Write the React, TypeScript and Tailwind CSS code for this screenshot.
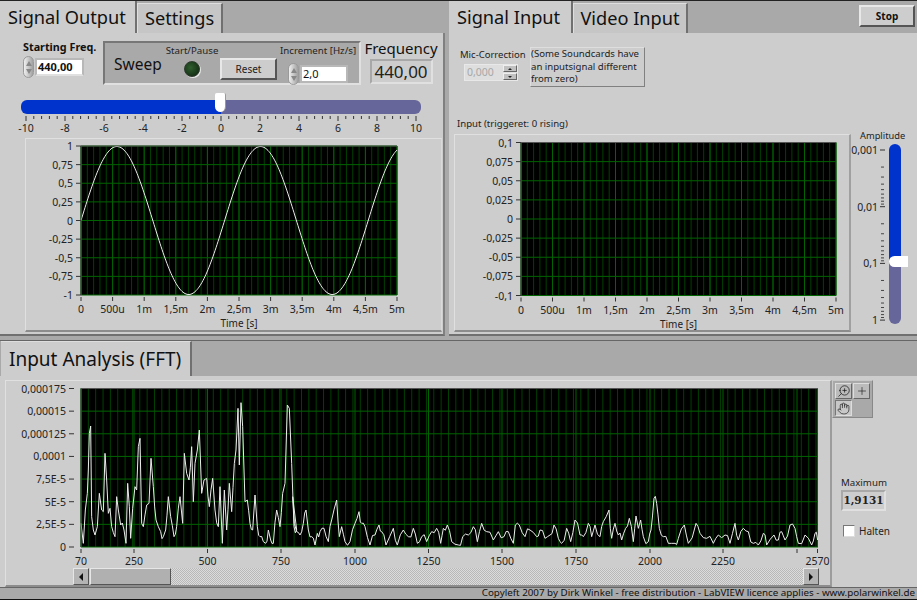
import { Hand, Plus, ZoomIn } from "lucide-react";

const FONT = "font-['Noto_Sans',sans-serif]";

const lowData = [
  [243,580],[250,640],[256,540],[262,490],[265,420],[268,310],[272,288],[275,560],[280,600],[285,615],[292,590],[298,490],[305,540],[310,545],[315,370],[320,450],[325,550],[330,535],[335,590],[345,620],[350,500],[355,540],[362,585],[372,600],[378,640],[383,460],[388,530],[392,625],[398,535],[405,470],[410,480],[415,350],[420,325],[425,580],[430,590],[440,525],[447,520],[453,385],[460,470],[468,570],[475,590],[482,605],[490,620],[497,600],[505,500],[512,560],[522,620],[530,590],[540,500],[548,580],[553,370],[560,430],[567,450],[575,350],[580,515],[585,400],[592,360],[598,300],[605,490],[612,450],[620,445],[628,530],[638,445],[645,540],[655,590],[660,470],[667,640],[673,480],[680,600],[688,460],[695,545],[703,400],[708,360],[714,235],[718,405],[723,218],[728,290],[735,515],[742,510],[750,580],[758,600],[765,495],[772,590],[780,620],[790,635],[797,640],[805,600],[812,630],[820,640],[830,540],[840,590],[848,490],[855,460],[862,225],[868,235],[875,400],[882,590],[890,600],
].map(([x, y]) => [x / 3, 330 + y / 3]);

const midData = [
  [38,350],[43,430],[50,455],[60,465],[70,430],[78,390],[85,450],[95,470],[105,495],[112,460],[120,455],[132,445],[145,485],[155,420],[170,360],[178,470],[185,440],[195,485],[210,485],[225,430],[237,395],[245,430],[255,440],[270,495],[285,465],[297,435],[305,455],[318,495],[340,445],[352,495],[370,450],[385,470],[400,445],[412,490],[425,470],[440,485],[455,455],[470,445],[482,490],[490,445],[502,435],[515,485],[535,495],[548,470],[565,465],[580,440],[592,485],[605,430],[620,455],[640,480],[655,455],[672,470],[685,455],[700,490],[706,435],[718,435],[735,470],[750,450],[770,470],[780,450],[795,475],[810,465],
].map(([x, y]) => [280 + x / 3, 380 + y / 3]);

const highData = [
  [12,255],[25,295],[35,310],[50,265],[62,305],[75,240],[90,285],[100,290],[115,250],[125,290],[135,255],[150,290],[160,245],[177,210],[185,295],[195,250],[205,285],[215,300],[227,265],[238,235],[250,305],[258,228],[265,265],[272,240],[280,290],[295,305],[303,270],[312,175],[320,190],[328,265],[340,290],[355,310],[375,310],[385,295],[403,255],[415,310],[438,250],[450,280],[470,295],[490,310],[505,285],[525,285],[540,310],[555,250],[565,300],[580,265],[595,275],[610,310],[625,315],[640,280],[650,315],[672,285],[685,300],[695,275],[705,300],[720,255],[735,265],[745,310],[765,285],[785,315],[795,280],[803,300],
].map(([x, y]) => [550 + x / 3, 440 + y / 3]);

// the traced points are sparser than the real trace, fill the gaps with a little noise
function roughen(points: number[][]) {
  const out: number[][] = [];
  points.forEach((p, i) => {
    out.push(p);
    const next = points[i + 1];
    if (next && next[0] - p[0] > 2.5) {
      const jitter = (((i * 37) % 11) - 5) * 0.9;
      const y = Math.min(546, (p[1] + next[1]) / 2 + jitter);
      out.push([(p[0] + next[0]) / 2, y]);
    }
  });
  return out;
}

const fftLine = roughen([...lowData, ...midData, ...highData]).map((p) => p.join(",")).join(" ");

const sineLine = Array.from({ length: 317 }, (_, i) => `${81 + i},${219.5 - 74 * Math.sin((2 * Math.PI * i) / 143.6)}`).join(" ");

function range(start: number, end: number, step: number) {
  const out: number[] = [];
  for (let v = start; v <= end + 0.01; v += step) out.push(v);
  return out;
}

type ChartProps = {
  box: [number, number, number, number];
  plot: [number, number, number, number];
  yLabels: string[];
  xTicks: { x: number; label: string }[];
  minor: number[];
  line?: string;
  title?: string;
  labelGap: number;
};

function Chart({ box, plot, yLabels, xTicks, minor, line, title, labelGap }: ChartProps) {
  const [bx, by, bw, bh] = box;
  const [px, py, pw, ph] = plot;
  const bottom = py + ph;
  const ys = yLabels.map((_, i) => py + (ph * i) / (yLabels.length - 1));
  return (
    <svg width={bw} height={bh} viewBox={`${bx} ${by} ${bw} ${bh}`} className={`block shrink-0 ${FONT}`}>
      <rect x={px} y={py} width={pw} height={ph} fill="#000" />
      {minor.map((x) => (
        <line key={x} x1={x} x2={x} y1={py} y2={bottom} stroke="#004000" />
      ))}
      {ys.map((y) => (
        <line key={y} x1={px} x2={px + pw} y1={y} y2={y} stroke="#006400" />
      ))}
      {xTicks.map((t) => (
        <line key={t.x} x1={t.x} x2={t.x} y1={py} y2={bottom} stroke="#006400" />
      ))}
      {line && <polyline points={line} fill="none" stroke="#ececec" strokeWidth={1} />}
      <line x1={px} x2={px} y1={py} y2={bottom} stroke="#555" />
      <line x1={px} x2={px + pw} y1={py} y2={py} stroke="#555" />
      {ys.map((y, i) => (
        <g key={y}>
          <line x1={px - labelGap + 5} x2={px - labelGap + 10} y1={y} y2={y} stroke="#333" />
          <text x={px - labelGap + 2} y={y + 4} textAnchor="end" fontSize={10.5} fill="#222">
            {yLabels[i]}
          </text>
        </g>
      ))}
      {xTicks.map((t) => (
        <g key={t.x}>
          <line x1={t.x} x2={t.x} y1={bottom + 2} y2={bottom + 6} stroke="#333" />
          {t.label && (
            <text x={t.x} y={bottom + 18} textAnchor="middle" fontSize={10.5} fill="#222">
              {t.label}
            </text>
          )}
        </g>
      ))}
      {title && (
        <text x={px + pw / 2} y={bottom + 32} textAnchor="middle" fontSize={10} fill="#222">
          {title}
        </text>
      )}
    </svg>
  );
}

const timeLabels = ["0", "500u", "1m", "1,5m", "2m", "2,5m", "3m", "3,5m", "4m", "4,5m", "5m"];

function Tab({ label, active, width }: { label: string; active?: boolean; width: number }) {
  return (
    <div
      style={{ width }}
      className={
        active
          ? "flex h-[32px] shrink-0 items-center border-r-2 border-r-[#707070] bg-[#cdcdcd] pl-[8px] text-[18.2px] leading-none whitespace-nowrap text-[#111]"
          : "mt-[2px] flex h-[30px] shrink-0 items-center justify-center border-t border-r-2 border-l border-t-[#dedede] border-r-[#707070] border-l-[#dedede] bg-[#c6c6c6] text-[18.2px] leading-none whitespace-nowrap text-[#111]"
      }
    >
      {label}
    </div>
  );
}

function Spinner() {
  return (
    <div className="relative flex h-[22px] w-[11px] shrink-0 flex-col items-center justify-center gap-[3px] rounded-full border border-[#9a9a9a] bg-gradient-to-r from-[#f0f0f0] to-[#a0a0a0]">
      <span className="h-0 w-0 border-x-[3px] border-b-[5px] border-x-transparent border-b-[#888]" />
      <span className="h-0 w-0 border-x-[3px] border-t-[5px] border-x-transparent border-t-[#888]" />
    </div>
  );
}

function ScaleTicks() {
  return (
    <svg width={420} height={30} viewBox="16 115 420 30" className={`block ${FONT}`}>
      {range(26, 416, 7.8).map((x, i) => (
        <line key={x} x1={x} x2={x} y1={117} y2={i % 5 === 0 ? 122 : 120} stroke="#333" />
      ))}
      {range(-10, 10, 2).map((v) => (
        <text key={v} x={221 + v * 19.5} y={133} textAnchor="middle" fontSize={10.5} fill="#222">
          {v}
        </text>
      ))}
    </svg>
  );
}

function AmplitudeScale() {
  const decades = [0, 1, 2];
  return (
    <svg width={44} height={190} viewBox="-8 139 44 190" className={`absolute top-[10px] left-[-8px] ${FONT}`}>
      {["0,001", "0,01", "0,1", "1"].map((v, i) => (
        <g key={v}>
          <line x1={27} x2={32} y1={149 + i * 56.7} y2={149 + i * 56.7} stroke="#333" />
          <text x={25} y={153 + i * 56.7} textAnchor="end" fontSize={10.5} fill="#222">
            {v}
          </text>
        </g>
      ))}
      {decades.map((d) =>
        [2, 3, 4, 5, 6, 7, 8, 9].map((k) => {
          const y = 149 + (d + Math.log10(k)) * 56.7;
          return <line key={`${d}-${k}`} x1={28} x2={31} y1={y} y2={y} stroke="#444" />;
        }),
      )}
    </svg>
  );
}

function ScrollArrow({ dir }: { dir: "left" | "right" }) {
  return (
    <div className="flex h-[17px] w-[16px] shrink-0 items-center justify-center border border-t-[#e6e6e6] border-r-[#555] border-b-[#555] border-l-[#e6e6e6] bg-[#b4b4b4]">
      {dir === "left" ? (
        <span className="h-0 w-0 border-y-[4px] border-r-[4px] border-y-transparent border-r-[#111]" />
      ) : (
        <span className="h-0 w-0 border-y-[4px] border-l-[4px] border-y-transparent border-l-[#111]" />
      )}
    </div>
  );
}

function SignalOutput() {
  return (
    <div className="flex w-[449px] shrink-0 flex-col">
      <div className="flex h-[32px]">
        <Tab label="Signal Output" active width={137} />
        <Tab label="Settings" width={86} />
      </div>
      <div className="flex h-[303px] w-[445px] flex-col border-r-2 border-b-2 border-r-[#808080] border-b-[#707070] bg-[#cdcdcd]">
        <div className="flex h-[55px] items-start pt-[8px] pl-[23px]">
          <div className="w-[80px] shrink-0">
            <div className="text-[10.8px] leading-[11px] font-bold whitespace-nowrap text-[#111]">Starting Freq.</div>
            <div className="mt-[4px] flex items-center gap-[1px]">
              <Spinner />
              <div className="flex h-[18px] w-[49px] items-center border-2 border-[#b8b8b8] border-b-[#e0e0e0] bg-white pl-[1px] text-[11px] font-bold text-[#111]">
                440,00
              </div>
            </div>
          </div>
          <div className="flex h-[44px] w-[258px] shrink-0 items-start border-2 border-t-[#777] border-r-[#e0e0e0] border-b-[#e0e0e0] border-l-[#777] bg-[#a9a9a9]">
            <div className="mt-[11px] ml-[9px] w-[50px] text-[15.5px] leading-[20px] text-[#111]">Sweep</div>
            <div className="mt-[2px] flex w-[56px] flex-col items-center">
              <div className="text-[9.7px] leading-[12px] whitespace-nowrap text-[#222]">Start/Pause</div>
              <div className="mt-[4px] h-[16px] w-[16px] rounded-full border border-[#2c3a2c] bg-[radial-gradient(circle_at_40%_40%,#2f5f2f,#0c200c)] shadow-[1px_1px_0_#e8e8e8]" />
            </div>
            <div className="mt-[15px] flex h-[22px] w-[57px] shrink-0 items-center justify-center border-2 border-t-[#e8e8e8] border-r-[#555] border-b-[#555] border-l-[#e8e8e8] bg-[#cdcdcd] text-[10px] text-[#222]">
              Reset
            </div>
            <div className="ml-[3px] flex flex-col">
              <div className="mt-[2px] text-[9.7px] leading-[12px] whitespace-nowrap text-[#222]">Increment [Hz/s]</div>
              <div className="mt-[6px] ml-[8px] flex items-center gap-[1px]">
                <Spinner />
                <div className="flex h-[18px] w-[48px] items-center border-2 border-[#b8b8b8] bg-white pl-[1px] text-[11px] text-[#111]">
                  2,0
                </div>
              </div>
            </div>
          </div>
          <div className="mt-[-2px] flex w-[80px] shrink-0 flex-col items-center">
            <div className="text-[15px] leading-[18px] text-[#111]">Frequency</div>
            <div className="mt-[2px] flex h-[25px] w-[63px] items-center justify-center border-2 border-t-[#a8a8a8] border-r-[#e0e0e0] border-b-[#e0e0e0] border-l-[#a8a8a8] text-[17px] text-[#222]">
              440,00
            </div>
          </div>
        </div>
        <div className="relative mt-[12px] ml-[21px] flex h-[14px] w-[400px]">
          <div className="w-[200px] rounded-l-[6px] bg-[#0033cc]" />
          <div className="w-[200px] rounded-r-[6px] bg-[#66669a]" />
          <div className="absolute top-[-7px] left-[194px] h-[19px] w-[11px] rounded-t-[2px] rounded-b-[6px] border-r border-[#999] bg-white" />
        </div>
        <div className="ml-[16px]">
          <ScaleTicks />
        </div>
        <div className="mt-[-6px] ml-[25px] w-[417px] border-t border-r border-b-2 border-l border-t-[#e0e0e0] border-r-[#dadada] border-b-[#8c8c8c] border-l-[#e0e0e0]">
          <Chart
            box={[26, 138, 415, 191]}
            plot={[81, 145, 316, 149]}
            yLabels={["1", "0,75", "0,5", "0,25", "0", "-0,25", "-0,5", "-0,75", "-1"]}
            xTicks={timeLabels.map((label, i) => ({ x: 81 + i * 31.6, label }))}
            minor={range(81, 397, 6.32)}
            line={sineLine}
            title="Time [s]"
            labelGap={10}
          />
        </div>
      </div>
    </div>
  );
}

function SignalInput() {
  return (
    <div className="flex flex-1 flex-col">
      <div className="flex h-[32px] bg-[#a9a9a9]">
        <Tab label="Signal Input" active width={124} />
        <Tab label="Video Input" width={115} />
        <div className="mt-[4px] mr-[2px] ml-auto flex h-[22px] w-[56px] items-center justify-center border-2 border-t-[#e8e8e8] border-r-[#555] border-b-[#555] border-l-[#e8e8e8] bg-[#cdcdcd] text-[10px] font-bold text-[#111]">
          Stop
        </div>
      </div>
      <div className="flex h-[303px] flex-col border-b-2 border-b-[#707070] bg-[#cdcdcd]">
        <div className="flex h-[54px] pt-[14px] pl-[11px]">
          <div className="w-[70px] shrink-0">
            <div className="mt-[2px] text-[9.5px] leading-[12px] whitespace-nowrap text-[#222]">Mic-Correction</div>
            <div className="mt-[3px] ml-[4px] flex h-[17px] w-[54px] items-center justify-between border border-[#e8e8e8] bg-[#dedede] pl-[2px] text-[10.5px] text-[#a8a8a8]">
              0,000
              <div className="flex h-[15px] w-[14px] flex-col gap-[1px]">
                <div className="flex h-[7px] items-center justify-center border border-t-[#eee] border-r-[#666] border-b-[#666] border-l-[#eee] bg-[#c0c0c0]">
                  <span className="h-0 w-0 border-x-[2px] border-b-[2px] border-x-transparent border-b-[#222]" />
                </div>
                <div className="flex h-[7px] items-center justify-center border border-t-[#eee] border-r-[#666] border-b-[#666] border-l-[#eee] bg-[#c0c0c0]">
                  <span className="h-0 w-0 border-x-[2px] border-t-[2px] border-x-transparent border-t-[#222]" />
                </div>
              </div>
            </div>
          </div>
          <div className="h-[40px] w-[115px] shrink-0 border border-t-[#dedede] border-r-[#808080] border-b-[#808080] border-l-[#dedede] text-[9.6px] leading-[12.5px] whitespace-nowrap text-[#222]">
            <div>(Some Soundcards have</div>
            <div>an inputsignal different</div>
            <div>from zero)</div>
          </div>
        </div>
        <div className="flex">
          <div className="flex w-[404px] shrink-0 flex-col">
            <div className="mt-[31px] ml-[8px] text-[9.6px] leading-[12px] text-[#222]">Input (triggeret: 0 rising)</div>
            <div className="mt-[4px] ml-[5px] w-[397px] border-t border-r-2 border-b-2 border-l border-t-[#e0e0e0] border-r-[#a0a0a0] border-b-[#8c8c8c] border-l-[#e0e0e0]">
              <Chart
                box={[456, 134, 394, 195]}
                plot={[522, 141.5, 315, 153]}
                yLabels={["0,1", "0,075", "0,05", "0,025", "0", "-0,025", "-0,05", "-0,075", "-0,1"]}
                xTicks={timeLabels.map((label, i) => ({ x: 522 + i * 31.5, label }))}
                minor={range(522, 837, 6.3)}
                title="Time [s]"
                labelGap={10}
              />
            </div>
          </div>
          <div className="relative mt-[43px] flex h-[200px] w-[60px] flex-col">
            <div className="ml-[7px] text-[9.3px] leading-[12px] text-[#222]">Amplitude</div>
            <AmplitudeScale />
            <div className="absolute top-[14px] left-[36px] flex h-[180px] w-[12px] flex-col">
              <div className="h-[116px] rounded-t-[6px] bg-[#0033cc]" />
              <div className="h-[64px] rounded-b-[6px] bg-[#66669a]" />
              <div className="absolute top-[112px] left-0 h-[11px] w-[19px] rounded-l-[6px] bg-white" />
            </div>
          </div>
        </div>
      </div>
    </div>
  );
}

function InputAnalysis() {
  return (
    <div className="flex flex-1 flex-col">
      <div className="flex h-[35px] bg-[#a9a9a9] pl-[1px]">
        <div className="flex h-[35px] w-[191px] shrink-0 items-center border-t border-r-2 border-t-[#dedede] border-r-[#707070] bg-[#cdcdcd] pl-[8px] text-[19px] leading-none whitespace-nowrap text-[#111]">
          Input Analysis (FFT)
        </div>
      </div>
      <div className="flex h-[211px] bg-[#cdcdcd] pt-[4px] pl-[5px]">
        <div className="flex h-[207px] w-[827px] shrink-0 flex-col border-t border-r-2 border-b-2 border-l border-t-[#e0e0e0] border-r-[#9c9c9c] border-b-[#8c8c8c] border-l-[#e0e0e0]">
          <Chart
            box={[6, 381, 824, 187]}
            plot={[81, 388.5, 737, 158.5]}
            yLabels={["0,000175", "0,00015", "0,000125", "0,0001", "7,5E-5", "5E-5", "2,5E-5", "0"]}
            xTicks={[
              { x: 81, label: "70" },
              { x: 134, label: "250" },
              { x: 207.5, label: "500" },
              { x: 281, label: "750" },
              { x: 355, label: "1000" },
              { x: 428.5, label: "1250" },
              { x: 502, label: "1500" },
              { x: 576, label: "1750" },
              { x: 650, label: "2000" },
              { x: 723, label: "2250" },
              { x: 797, label: "" },
              { x: 817.5, label: "2570" },
            ]}
            minor={range(81, 818, 7.35)}
            line={fftLine}
            labelGap={17}
          />
          <div className="ml-[67px] flex h-[17px] w-[746px]">
            <ScrollArrow dir="left" />
            <div className="ml-[1px] h-[17px] w-[81px] border border-t-[#e6e6e6] border-r-[#555] border-b-[#555] border-l-[#e6e6e6] bg-[#b0b0b0]" />
            <div className="flex-1 bg-[repeating-conic-gradient(#b8b8b8_0_25%,#dcdcdc_0_50%)] bg-[length:2px_2px]" />
            <ScrollArrow dir="right" />
          </div>
        </div>
        <div className="flex flex-col">
          <div className="grid h-[38px] w-[41px] grid-cols-2 gap-[1px] border border-t-[#c8c8c8] border-r-[#888] border-b-[#888] border-l-[#c8c8c8] bg-[#a9a9a9] p-[2px]">
            <div className="flex h-[16px] items-center justify-center border border-t-[#ddd] border-r-[#666] border-b-[#666] border-l-[#ddd] bg-[#bbb]">
              <ZoomIn size={14} strokeWidth={1.2} color="#111" className="-scale-x-100" />
            </div>
            <div className="flex h-[16px] items-center justify-center border border-t-[#ddd] border-r-[#666] border-b-[#666] border-l-[#ddd] bg-[#bbb]">
              <Plus size={12} strokeWidth={1.2} color="#111" />
            </div>
            <div className="flex h-[16px] items-center justify-center border border-t-[#777] border-r-[#ddd] border-b-[#ddd] border-l-[#777] bg-[#c8c8c8]">
              <Hand size={13} strokeWidth={1.2} color="#111" />
            </div>
          </div>
          <div className="mt-[59px] ml-[9px] text-[9.7px] leading-[12px] text-[#222]">Maximum</div>
          <div className="mt-[1px] ml-[9px] flex h-[21px] w-[45px] items-center justify-center border-2 border-t-[#a8a8a8] border-r-[#e0e0e0] border-b-[#e0e0e0] border-l-[#a8a8a8] font-['DejaVu_Serif',serif] text-[10.5px] font-bold text-[#222]">
            1,9131
          </div>
          <div className="mt-[14px] ml-[11px] flex items-center gap-[4px]">
            <div className="h-[12px] w-[12px] border border-t-[#777] border-r-[#ddd] border-b-[#ddd] border-l-[#777] bg-white" />
            <span className="text-[10px] leading-[12px] text-[#222]">Halten</span>
          </div>
        </div>
      </div>
    </div>
  );
}

export default function App() {
  return (
    <div className={`flex h-[600px] w-[917px] flex-col overflow-hidden border-t border-t-[#222] bg-[#a9a9a9] ${FONT}`}>
      <div className="flex h-[335px] shrink-0">
        <SignalOutput />
        <SignalInput />
      </div>
      <div className="h-[5px] shrink-0 border-b border-b-[#666] bg-[#a9a9a9]" />
      <InputAnalysis />
      <div className="flex h-[13px] shrink-0 items-center justify-end border-t border-b border-t-[#666] border-b-[#111] bg-[#a9a9a9] pr-[2px] text-[9.8px] whitespace-nowrap text-[#111]">
        Copyleft 2007 by Dirk Winkel - free distribution - LabVIEW licence applies - www.polarwinkel.de
      </div>
    </div>
  );
}
